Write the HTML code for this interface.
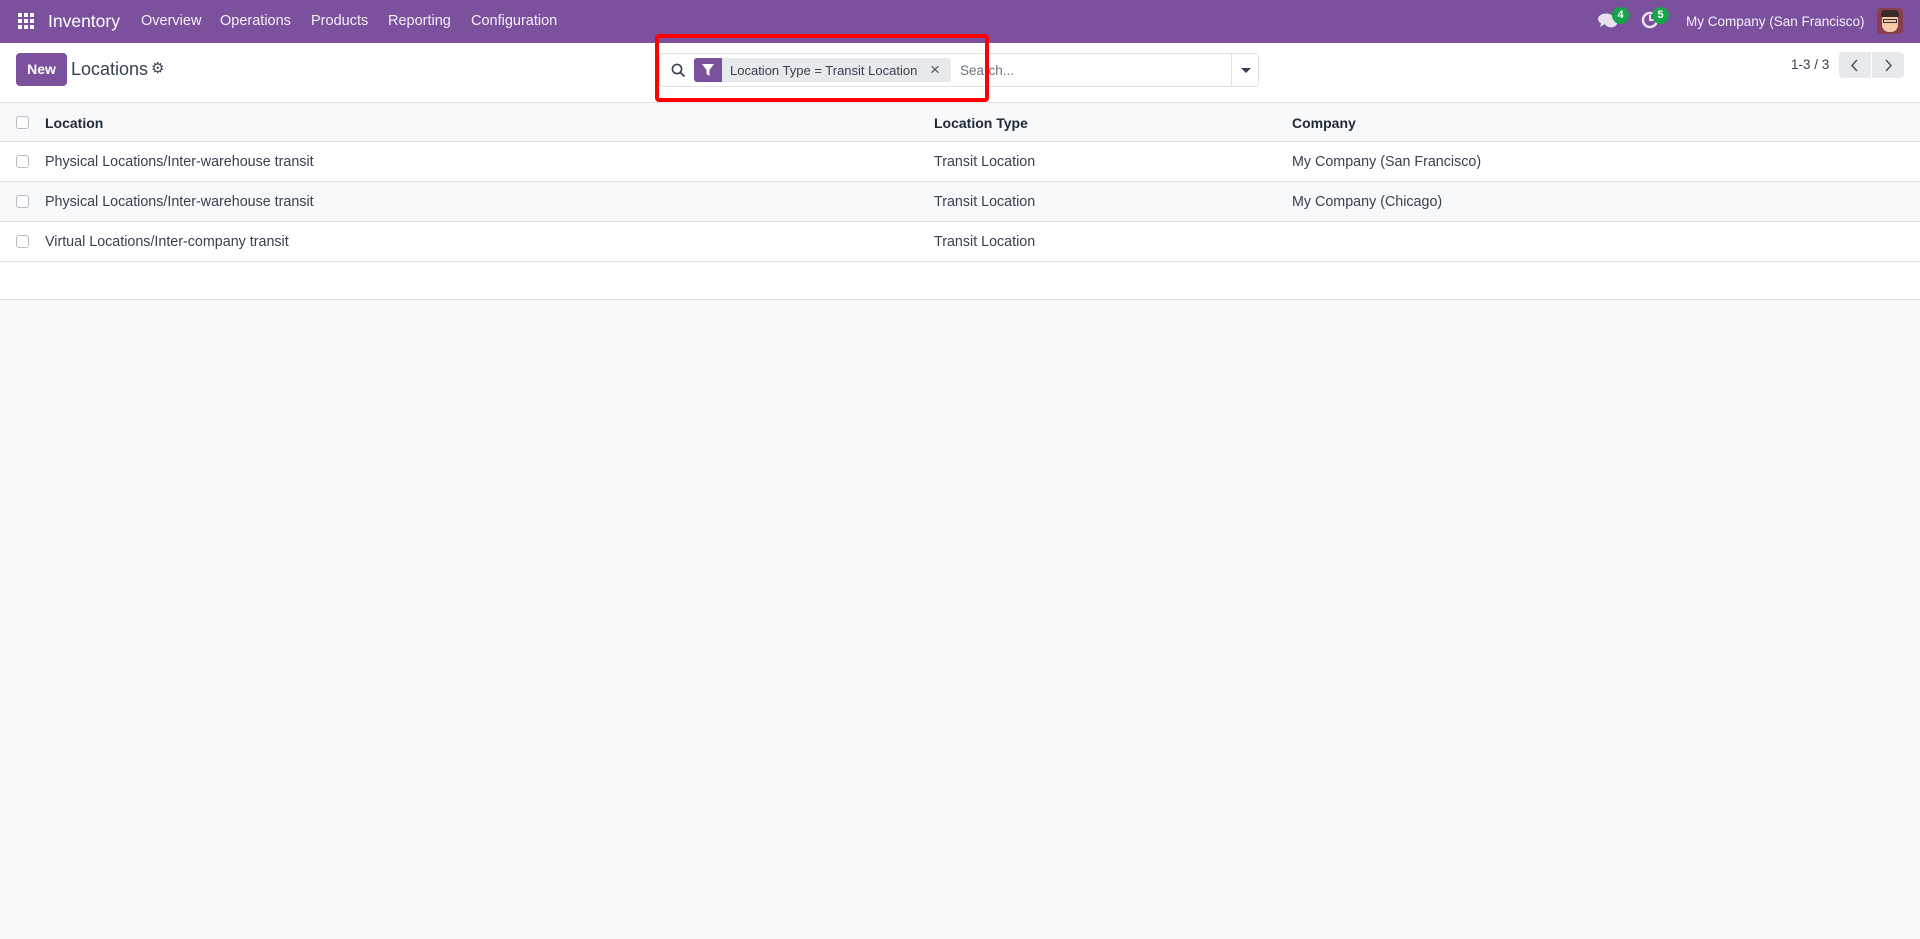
<!DOCTYPE html>
<html><head><meta charset="utf-8"><style>
*{box-sizing:border-box;margin:0;padding:0}
body{width:1920px;height:939px;background:#f9fafb;font-family:"Liberation Sans",sans-serif;color:#374151;position:relative;overflow:hidden;font-size:14.3px}
.nav{position:absolute;left:0;top:0;width:1920px;height:43px;background:#7b519d;color:#fff}
.nav span{position:absolute;top:13px;font-size:14.5px;color:#f3eef7}
.cp{position:absolute;left:0;top:43px;width:1920px;height:60px;background:#fff;border-bottom:1px solid #dee2e6}
.abs{position:absolute}
.row{position:absolute;left:0;width:1920px;border-bottom:1px solid #dee2e6;background:#fff}
.cb{position:absolute;left:16px;width:13px;height:13px;border:1px solid #b8bcc2;border-radius:3px;background:#fff}
.row span{position:absolute}
</style></head><body>
<div class="nav">
 <svg class="abs" style="left:18px;top:13px" width="16" height="16" viewBox="0 0 16 16" fill="#fff"><rect x="0" y="0" width="4" height="4"/><rect x="6" y="0" width="4" height="4"/><rect x="12" y="0" width="4" height="4"/><rect x="0" y="6" width="4" height="4"/><rect x="6" y="6" width="4" height="4"/><rect x="12" y="6" width="4" height="4"/><rect x="0" y="12" width="4" height="4"/><rect x="6" y="12" width="4" height="4"/><rect x="12" y="12" width="4" height="4"/></svg>
 <span style="left:48px;top:11px;font-size:17.5px;color:#fff">Inventory</span>
 <span style="left:141px">Overview</span>
 <span style="left:220px">Operations</span>
 <span style="left:311px">Products</span>
 <span style="left:388px">Reporting</span>
 <span style="left:471px">Configuration</span>
 <svg class="abs" style="left:1598px;top:13px" width="20" height="17" viewBox="0 0 20 17" fill="#e8e0ef"><ellipse cx="8" cy="6" rx="8" ry="5.5"/><path d="M3 10 L2 14 L7 11Z"/><ellipse cx="13" cy="10" rx="6" ry="4.5"/></svg>
 <div class="abs" style="left:1612px;top:7px;width:17px;height:17px;border-radius:9px;background:#17a34a;color:#fff;font-size:11px;text-align:center;line-height:17px;font-weight:bold">4</div>
 <svg class="abs" style="left:1641px;top:11px" width="18" height="18" viewBox="0 0 18 18"><circle cx="9" cy="9" r="7" fill="none" stroke="#e8e0ef" stroke-width="2.5"/><path d="M9 4v5h4" stroke="#e8e0ef" stroke-width="2" fill="none"/></svg>
 <div class="abs" style="left:1652px;top:7px;width:17px;height:17px;border-radius:9px;background:#17a34a;color:#fff;font-size:11px;text-align:center;line-height:17px;font-weight:bold">5</div>
 <span style="left:1686px;font-size:13.5px;top:14px">My Company (San Francisco)</span>
 <div class="abs" style="left:1877px;top:8px;width:26px;height:26px;border-radius:4px;background:#8a3f4f;overflow:hidden"><div class="abs" style="left:5px;top:4px;width:16px;height:20px;border-radius:7px;background:#f3c9a8"></div><div class="abs" style="left:4px;top:2px;width:18px;height:7px;border-radius:4px 4px 0 0;background:#3b2a2a"></div><div class="abs" style="left:6px;top:11px;width:14px;height:4px;border:1px solid #333"></div></div>
</div>
<div class="cp">
 <div class="abs" style="left:16px;top:10px;width:51px;height:33px;background:#7b519d;border-radius:4px;color:#fff;font-weight:bold;font-size:14px;text-align:center;line-height:33px">New</div>
 <div class="abs" style="left:71px;top:16px;font-size:18px;color:#374151">Locations</div>
 <div class="abs" style="left:151px;top:16px;font-size:15px;color:#374151">⚙</div>
 <div class="abs" style="left:659px;top:10px;width:600px;height:34px;border:1px solid #dee2e6;border-radius:4px;background:#fff">
  <svg class="abs" style="left:11px;top:9px" width="15" height="15" viewBox="0 0 15 15"><circle cx="6" cy="6" r="4.6" fill="none" stroke="#374151" stroke-width="1.6"/><path d="M9.5 9.5L13.5 13.5" stroke="#374151" stroke-width="1.8"/></svg>
  <div class="abs" style="left:34px;top:4px;width:257px;height:24px;background:#e7e9ed;border-radius:3px"></div>
  <div class="abs" style="left:34px;top:4px;width:28px;height:24px;background:#7b519d;border-radius:3px 0 0 3px"><svg class="abs" style="left:8px;top:6px" width="12" height="12" viewBox="0 0 12 12"><path d="M0 0H12L7.5 6V12L4.5 10V6Z" fill="#fff"/></svg></div>
  <div class="abs" style="left:70px;top:9px;font-size:13px;color:#374151">Location Type = Transit Location</div>
  <div class="abs" style="left:270px;top:6px;font-size:17px;color:#4b5563">×</div>
  <div class="abs" style="left:300px;top:9px;font-size:13.5px;color:#6b7280">Search...</div>
  <div class="abs" style="left:571px;top:0;width:1px;height:32px;background:#dee2e6"></div>
  <div class="abs" style="left:581px;top:14px;width:0;height:0;border-left:5px solid transparent;border-right:5px solid transparent;border-top:5px solid #374151"></div>
 </div>
 <div class="abs" style="left:655px;top:-9px;width:334px;height:68px;border:4px solid #ff0000;border-radius:4px"></div>
 <div class="abs" style="left:1791px;top:14px;font-size:13.5px">1-3 / 3</div>
 <div class="abs" style="left:1839px;top:9px;width:32px;height:26px;background:#e7e9ed;border-radius:4px 0 0 4px"><svg class="abs" style="left:11px;top:7px" width="9" height="13" viewBox="0 0 9 13"><path d="M7 1L2 6.5L7 12" fill="none" stroke="#4b5563" stroke-width="1.5"/></svg></div>
 <div class="abs" style="left:1872px;top:9px;width:32px;height:26px;background:#e7e9ed;border-radius:0 4px 4px 0"><svg class="abs" style="left:12px;top:7px" width="9" height="13" viewBox="0 0 9 13"><path d="M2 1L7 6.5L2 12" fill="none" stroke="#4b5563" stroke-width="1.5"/></svg></div>
</div>
<div class="row" style="top:103px;height:39px;background:#f8f9fa;font-weight:bold;color:#1f2937;font-size:14px"><div class="cb" style="top:13px"></div><span style="left:45px;top:12px">Location</span><span style="left:934px;top:12px">Location Type</span><span style="left:1292px;top:12px">Company</span></div>
<div class="row" style="top:142px;height:40px"><div class="cb" style="top:13px"></div><span style="left:45px;top:12px">Physical Locations/Inter-warehouse transit</span><span style="left:934px;top:12px">Transit Location</span><span style="left:1292px;top:12px">My Company (San Francisco)</span></div>
<div class="row" style="top:182px;height:40px;background:#f8f9fa"><div class="cb" style="top:13px"></div><span style="left:45px;top:12px">Physical Locations/Inter-warehouse transit</span><span style="left:934px;top:12px">Transit Location</span><span style="left:1292px;top:12px">My Company (Chicago)</span></div>
<div class="row" style="top:222px;height:40px"><div class="cb" style="top:13px"></div><span style="left:45px;top:12px">Virtual Locations/Inter-company transit</span><span style="left:934px;top:12px">Transit Location</span></div>
<div class="row" style="top:262px;height:38px"></div>
</body></html>
